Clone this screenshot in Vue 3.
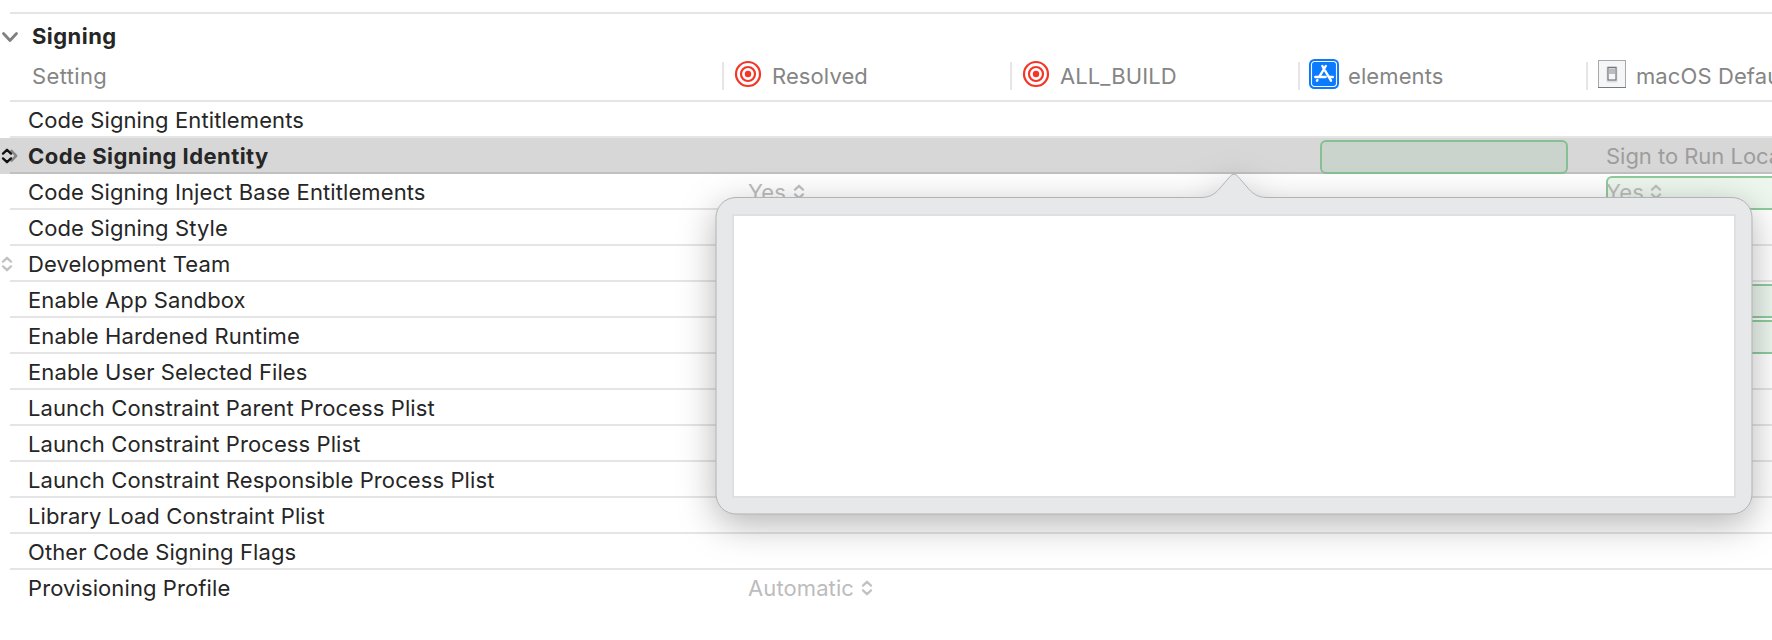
<script setup>
const columns = [
  { label: 'Resolved', icon: 'target' },
  { label: 'ALL_BUILD', icon: 'target' },
  { label: 'elements', icon: 'app' },
  { label: 'macOS Default', icon: 'platform' },
]

const rows = [
  { name: 'Code Signing Entitlements' },
  { name: 'Code Signing Identity', selected: true, stepper: true, elements: { boxed: true }, platform: { text: 'Sign to Run Locally' } },
  { name: 'Code Signing Inject Base Entitlements', resolved: { text: 'Yes', stepper: true }, platform: { text: 'Yes', stepper: true, boxed: true } },
  { name: 'Code Signing Style' },
  { name: 'Development Team', stepper: true },
  { name: 'Enable App Sandbox', platform: { boxed: true } },
  { name: 'Enable Hardened Runtime', platform: { boxed: true } },
  { name: 'Enable User Selected Files' },
  { name: 'Launch Constraint Parent Process Plist' },
  { name: 'Launch Constraint Process Plist' },
  { name: 'Launch Constraint Responsible Process Plist' },
  { name: 'Library Load Constraint Plist' },
  { name: 'Other Code Signing Flags' },
  { name: 'Provisioning Profile', resolved: { text: 'Automatic', stepper: true } },
]

const cellKeys = ['resolved', 'target', 'elements', 'platform']
</script>

<template>
  <main class="settings">
    <header class="section">
      <svg class="disclosure" width="20" height="14" viewBox="0 0 20 14">
        <path d="M3.5 3.5 L10 10.5 L16.5 3.5" fill="none" stroke="#808080" stroke-width="2.8" stroke-linecap="round" stroke-linejoin="round" />
      </svg>
      <h1>Signing</h1>
    </header>

    <div class="columns">
      <div class="setting">Setting</div>
      <div v-for="col in columns" :key="col.label" class="column">
        <svg v-if="col.icon === 'target'" class="icon" width="30" height="30" viewBox="0 0 30 30">
          <g fill="none" stroke="#f53527" stroke-width="2.2">
            <circle cx="15" cy="15" r="12" />
            <circle cx="15" cy="15" r="7" />
          </g>
          <circle cx="15" cy="15" r="3.2" fill="#f53527" />
        </svg>
        <svg v-else-if="col.icon === 'app'" class="icon" width="30" height="30" viewBox="0 0 30 30">
          <rect width="30" height="30" rx="5.5" fill="#0a7aff" />
          <rect x="2.5" y="2.5" width="25" height="25" rx="3.2" fill="none" stroke="#fff" stroke-width="1.1" />
          <g fill="none" stroke="#fff" stroke-width="2.4" stroke-linecap="round">
            <path d="M16.8 7 L10.4 17.6" />
            <path d="M13.3 7 L14.6 9.2" />
            <path d="M16.2 11.8 L22 21.7" />
            <path d="M6.3 18 H16.6" />
            <path d="M20.6 18 H23.8" />
            <path d="M8.4 21 L8 21.7" />
          </g>
        </svg>
        <svg v-else class="icon" width="30" height="30" viewBox="0 0 30 30">
          <rect x="1.5" y="1.5" width="27" height="27" fill="#f4f6f7" stroke="#a6a8aa" />
          <path d="M1 28.5 H29" stroke="#77797b" />
          <rect x="9.5" y="7" width="11" height="16.5" rx="1.5" fill="#dcdedf" />
          <rect x="11" y="8.5" width="8" height="12.5" fill="#f3f5f7" stroke="#75787b" stroke-width="1.2" />
          <rect x="12" y="9.5" width="6" height="5.5" fill="#b9bdc2" />
        </svg>
        <span>{{ col.label }}</span>
      </div>
    </div>

    <div class="rows">
      <div v-for="row in rows" :key="row.name" class="row" :class="{ selected: row.selected }">
        <div class="gutter">
          <svg v-if="row.stepper" class="stepper" width="12" height="16" viewBox="0 0 12 16">
            <path d="M2 5.6 L6 1.8 L10 5.6 M2 10.4 L6 14.2 L10 10.4" />
          </svg>
          <svg v-if="row.selected" class="more" width="9" height="16" viewBox="0 0 9 16">
            <path d="M1.8 2.2 L7.2 7.8 L1.8 13.4" fill="none" stroke="#858585" stroke-width="2.5" stroke-linejoin="round" />
          </svg>
        </div>
        <div class="name">{{ row.name }}</div>
        <div v-for="key in cellKeys" :key="key" class="cell">
          <div v-if="row[key]" class="value" :class="[key, { boxed: row[key].boxed }]">
            <span>{{ row[key].text }}</span>
            <svg v-if="row[key].stepper" class="stepper" width="12" height="16" viewBox="0 0 12 16">
              <path d="M2 5.6 L6 1.8 L10 5.6 M2 10.4 L6 14.2 L10 10.4" />
            </svg>
          </div>
        </div>
      </div>
    </div>

    <div class="popover">
      <svg class="bubble" width="1038" height="342" viewBox="0 0 1038 342">
        <path
          d="M21 24.5 H486 C496 24.5 501 20 506 14 L515 3.5 Q519 -1.2 523 3.5 L532 14 C537 20 542 24.5 552 24.5 H1017 A20 20 0 0 1 1037 44.5 V321 A20 20 0 0 1 1017 341 H21 A20 20 0 0 1 1 321 V44.5 A20 20 0 0 1 21 24.5 Z"
          fill="#e7e8ea" stroke="#b2b3b4" stroke-width="1" />
      </svg>
      <div class="editor"></div>
    </div>
  </main>
</template>

<style>
body {
  background: #fff;
  overflow: hidden;
}
</style>

<style scoped>
.settings {
  position: relative;
  box-sizing: border-box;
  width: 1772px;
  height: 640px;
  padding-top: 12px;
  overflow: hidden;
  background: #fff;
  color: #262626;
  font: 22px/34px Inter, "Liberation Sans", sans-serif;
  letter-spacing: 0.1px;
  white-space: nowrap;
}
.section {
  display: flex;
  align-items: center;
  box-sizing: border-box;
  height: 44px;
  margin-left: 10px;
  border-top: 2px solid #e5e5e5;
}
.disclosure {
  margin: 3px 12px 0 -10px;
  flex: none;
}
h1 {
  margin: 1px 0 0;
  font-size: 22px;
  font-weight: 700;
  letter-spacing: 0.45px;
}
.columns {
  display: grid;
  grid-template-columns: 712px repeat(4, 288px);
  box-sizing: border-box;
  height: 46px;
  margin-left: 10px;
  border-bottom: 2px solid #e5e5e5;
  color: #858585;
}
.setting {
  padding: 3px 0 0 22px;
  letter-spacing: 0.35px;
}
.column {
  display: flex;
  align-self: start;
  align-items: center;
  height: 28px;
  margin-top: 6px;
  border-left: 2px solid #e5e5e5;
}
.column span {
  margin: 0 0 0 9px;
}
.icon {
  flex: none;
  margin: -4px 0 0 9px;
}
.row {
  display: grid;
  grid-template-columns: 28px 716px 288px 288px 286px 288px;
  height: 36px;
  background: linear-gradient(#e5e5e5, #e5e5e5) 10px 100% / 100% 2px no-repeat;
}
.row:last-child {
  background: none;
}
.row.selected {
  background: linear-gradient(#c0c0c0, #c0c0c0) 10px 100% / 100% 2px no-repeat #d7d7d7;
}
.gutter {
  display: flex;
  align-items: center;
  padding-left: 1px;
}
.stepper {
  position: relative;
  flex: none;
}
.stepper path {
  fill: none;
  stroke: #c2c2c2;
  stroke-width: 2.3;
  stroke-linecap: round;
  stroke-linejoin: round;
}
.selected .stepper path {
  stroke: #111;
}
.selected .stepper {
  z-index: 1;
}
.more {
  flex: none;
  margin-left: -4px;
}
.name {
  padding-top: 1px;
}
.selected .name {
  font-weight: 700;
  letter-spacing: 0.45px;
}
.value {
  display: flex;
  align-items: center;
  box-sizing: border-box;
  height: 34px;
  margin-top: 2px;
  color: #bcbcbc;
}
.value span {
  margin-top: -3px;
}
.value .stepper {
  margin: -2px 0 0 7px;
}
.value.resolved {
  padding-left: 4px;
}
.selected .value.platform {
  color: #9d9d9d;
  letter-spacing: -0.03px;
}
.boxed {
  width: 248px;
  border: 2px solid #8fcb9d;
  border-radius: 6px;
  background: #edf7ee;
}
.boxed span {
  margin-left: -2px;
}
.boxed .stepper {
  margin-left: 6px;
}
.selected .boxed {
  border-color: #87bf94;
  background: #cad4cc;
}
.popover {
  position: absolute;
  left: 715px;
  top: 173px;
  box-sizing: border-box;
  width: 1038px;
  height: 342px;
  padding: 41px 17px 17px;
  display: flex;
}
.bubble {
  position: absolute;
  inset: 0;
  overflow: visible;
  filter: drop-shadow(0 10px 18px rgba(0, 0, 0, 0.29));
}
.editor {
  position: relative;
  flex: 1;
  border: 2px solid #dfe0e2;
  background: #fff;
}
</style>
